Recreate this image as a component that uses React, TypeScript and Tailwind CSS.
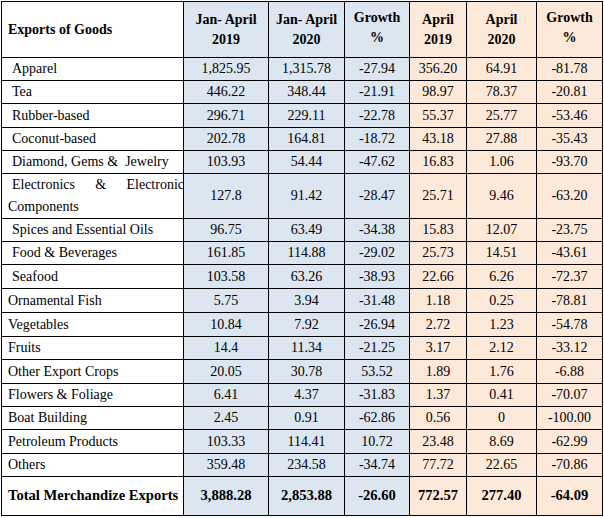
import React from 'react';

type Row = {
  label: string;
  indent?: boolean;
  h: string;
  v: string[];
};

const rows: Row[] = [
  { label: 'Apparel', indent: true, h: 'h-[23px]', v: ['1,825.95', '1,315.78', '-27.94', '356.20', '64.91', '-81.78'] },
  { label: 'Tea', indent: true, h: 'h-[23px]', v: ['446.22', '348.44', '-21.91', '98.97', '78.37', '-20.81'] },
  { label: 'Rubber-based', indent: true, h: 'h-[24px]', v: ['296.71', '229.11', '-22.78', '55.37', '25.77', '-53.46'] },
  { label: 'Coconut-based', indent: true, h: 'h-[23px]', v: ['202.78', '164.81', '-18.72', '43.18', '27.88', '-35.43'] },
  { label: 'Diamond, Gems &\u00a0 Jewelry', indent: true, h: 'h-[23px]', v: ['103.93', '54.44', '-47.62', '16.83', '1.06', '-93.70'] },
  { label: 'ELEC', h: 'h-[44px]', v: ['127.8', '91.42', '-28.47', '25.71', '9.46', '-63.20'] },
  { label: 'Spices and Essential Oils', indent: true, h: 'h-[23px]', v: ['96.75', '63.49', '-34.38', '15.83', '12.07', '-23.75'] },
  { label: 'Food & Beverages', indent: true, h: 'h-[23px]', v: ['161.85', '114.88', '-29.02', '25.73', '14.51', '-43.61'] },
  { label: 'Seafood', indent: true, h: 'h-[24px]', v: ['103.58', '63.26', '-38.93', '22.66', '6.26', '-72.37'] },
  { label: 'Ornamental Fish', h: 'h-[24px]', v: ['5.75', '3.94', '-31.48', '1.18', '0.25', '-78.81'] },
  { label: 'Vegetables', h: 'h-[24px]', v: ['10.84', '7.92', '-26.94', '2.72', '1.23', '-54.78'] },
  { label: 'Fruits', h: 'h-[23px]', v: ['14.4', '11.34', '-21.25', '3.17', '2.12', '-33.12'] },
  { label: 'Other Export Crops', h: 'h-[24px]', v: ['20.05', '30.78', '53.52', '1.89', '1.76', '-6.88'] },
  { label: 'Flowers & Foliage', h: 'h-[23px]', v: ['6.41', '4.37', '-31.83', '1.37', '0.41', '-70.07'] },
  { label: 'Boat Building', h: 'h-[23px]', v: ['2.45', '0.91', '-62.86', '0.56', '0', '-100.00'] },
  { label: 'Petroleum Products', h: 'h-[24px]', v: ['103.33', '114.41', '10.72', '23.48', '8.69', '-62.99'] },
  { label: 'Others', h: 'h-[23px]', v: ['359.48', '234.58', '-34.74', '77.72', '22.65', '-70.86'] },
];

const total = ['3,888.28', '2,853.88', '-26.60', '772.57', '277.40', '-64.09'];

const cellBg = (i: number) => (i < 3 ? 'bg-[#dce6f1]' : 'bg-[#fde9d9]');

export default function App() {
  return (
    <div className="bg-white w-[604px] h-[518px] pl-px pt-px font-['Liberation_Serif',serif] text-[14px] text-black">
      <table className="table-fixed border-collapse w-[601px]">
        <colgroup>
          <col className="w-[182px]" />
          <col className="w-[85px]" />
          <col className="w-[76px]" />
          <col className="w-[65px]" />
          <col className="w-[57px]" />
          <col className="w-[70px]" />
          <col className="w-[66px]" />
        </colgroup>
        <thead>
          <tr className="h-[56px]">
            <th className="border border-black text-left pl-[6px] font-bold">Exports of Goods</th>
            <th className="border border-black bg-[#dce6f1] font-bold leading-[20px]">Jan- April<br />2019</th>
            <th className="border border-black bg-[#dce6f1] font-bold leading-[20px]">Jan- April<br />2020</th>
            <th className="border border-black bg-[#dce6f1] font-bold leading-[20px] align-top pt-[6px]">Growth<br />%</th>
            <th className="border border-black bg-[#fde9d9] font-bold leading-[20px]">April<br />2019</th>
            <th className="border border-black bg-[#fde9d9] font-bold leading-[20px]">April<br />2020</th>
            <th className="border border-black bg-[#fde9d9] font-bold leading-[20px] align-top pt-[6px]">Growth<br />%</th>
          </tr>
        </thead>
        <tbody>
          {rows.map((r) => (
            <tr key={r.label} className={r.h}>
              {r.label === 'ELEC' ? (
                <td className="border border-black p-0 pl-[6px] leading-[22px]">
                  <div className="text-justify indent-[4px] w-[176px] overflow-hidden">
                    Electronics &amp; Electronic Components
                  </div>
                </td>
              ) : (
                <td className={`border border-black leading-none whitespace-nowrap ${r.indent ? 'pl-[10px]' : 'pl-[6px]'}`}>
                  {r.label}
                </td>
              )}
              {r.v.map((x, i) => (
                <td key={i} className={`border border-black text-center leading-none ${cellBg(i)}`}>
                  {x}
                </td>
              ))}
            </tr>
          ))}
          <tr className="h-[39px]">
            <td className="border border-black pl-[6px] font-bold text-[14.6px] whitespace-nowrap">Total Merchandize Exports</td>
            {total.map((x, i) => (
              <td key={i} className={`border border-black text-center font-bold text-[14.6px] ${cellBg(i)}`}>
                {x}
              </td>
            ))}
          </tr>
        </tbody>
      </table>
    </div>
  );
}
